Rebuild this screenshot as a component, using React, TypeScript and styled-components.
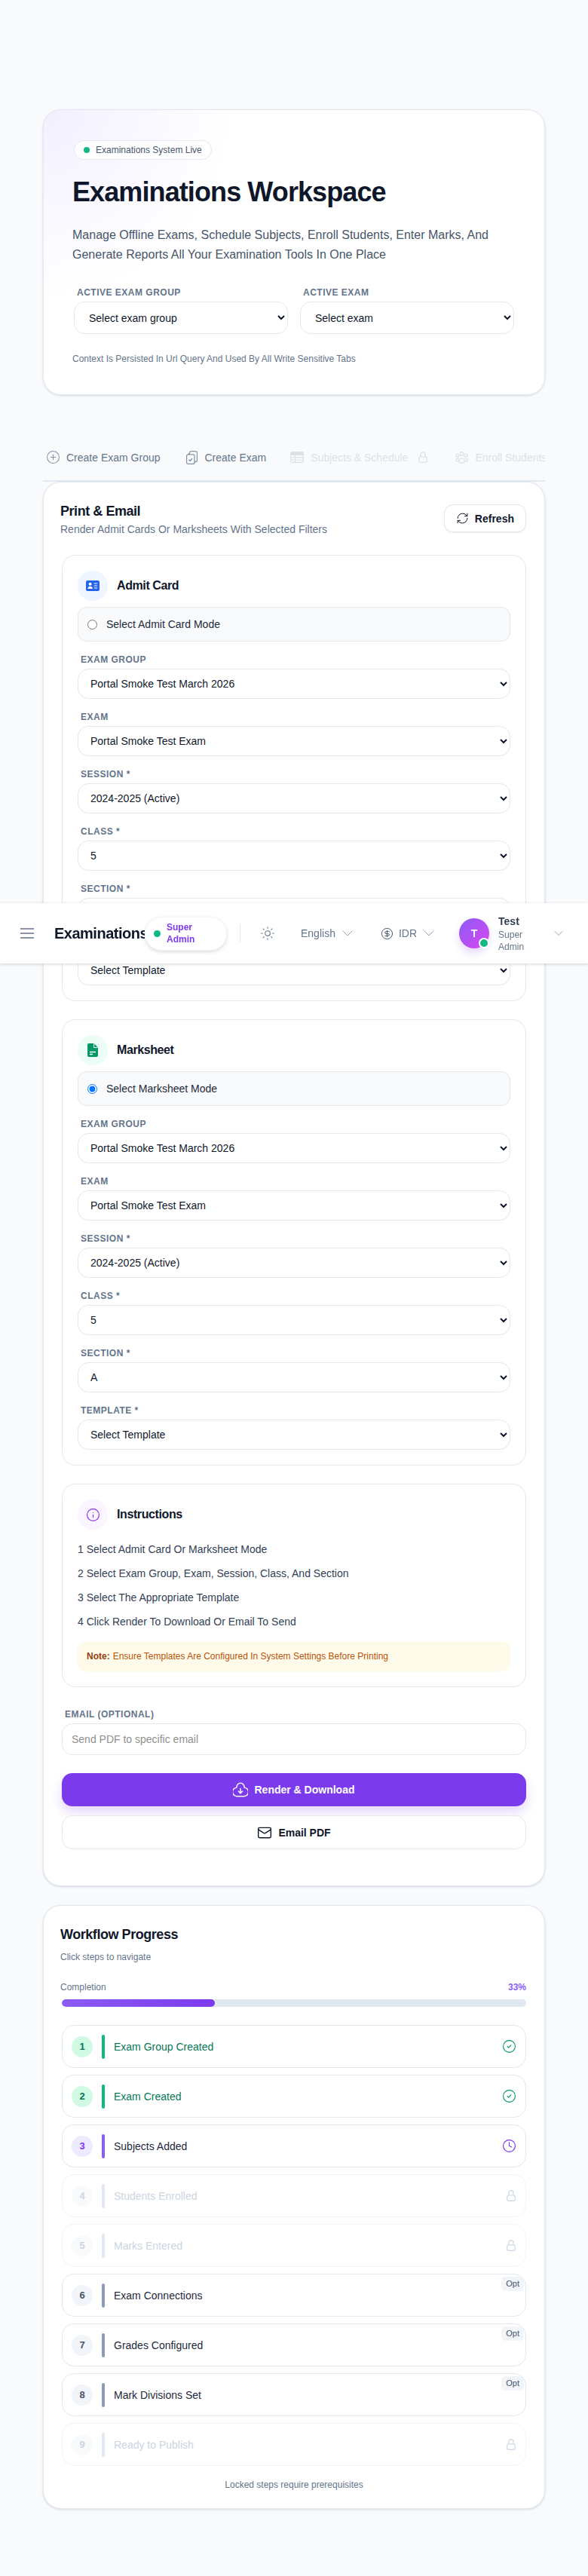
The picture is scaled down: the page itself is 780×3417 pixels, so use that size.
import { useState } from 'react';
import styled, { createGlobalStyle } from 'styled-components';
import {
  ChevronDown,
  CircleCheck,
  CircleDollarSign,
  CirclePlus,
  Clock,
  Info,
  Mail,
  RefreshCw,
  Sun,
} from 'lucide-react';

const GlobalStyle = createGlobalStyle`
  * { box-sizing: border-box; }
  html, body { margin: 0; padding: 0; }
  body {
    background: #f8fafc;
    font-family: "Liberation Sans", Arial, sans-serif;
    color: #0f172a;
  }
  #root { position: relative; }
`;

const Page = styled.div`
  position: relative;
  height: 3417px;
  padding: 145px 57px 0;
`;

const Hero = styled.section`
  height: 379px;
  padding: 40px;
  border: 1px solid #e2e8f0;
  border-radius: 24px;
  background: radial-gradient(circle at 0 0, #f3f0ff 0, #ffffff 33%);
  box-shadow: 0 1px 3px rgba(15, 23, 42, 0.14);
`;

const LiveBadge = styled.div`
  display: inline-flex;
  align-items: center;
  gap: 8px;
  height: 26px;
  padding: 0 12px;
  border: 1px solid #e2e8f0;
  border-radius: 13px;
  background: #fff;
  font-size: 12px;
  color: #475569;
`;

const Dot = styled.span<{ $size?: number }>`
  display: block;
  flex: none;
  width: ${(p) => p.$size ?? 8}px;
  height: ${(p) => p.$size ?? 8}px;
  border-radius: 50%;
  background: #10b981;
`;

const HeroTitle = styled.h1`
  margin: 21px 0 0 -2px;
  font-size: 36px;
  line-height: 44px;
  font-weight: 700;
  letter-spacing: -0.025em;
  color: #0f172a;
`;

const HeroText = styled.p`
  margin: 22px 0 0 -2px;
  font-size: 16px;
  line-height: 26px;
  color: #475569;
`;

const HeroGrid = styled.div`
  display: grid;
  grid-template-columns: 1fr 1fr;
  gap: 16px;
  margin-top: 29px;
`;

const FieldLabel = styled.label`
  display: block;
  margin: 0 0 4px 4px;
  font-size: 12px;
  line-height: 16px;
  font-weight: 700;
  letter-spacing: 0.5px;
  text-transform: uppercase;
  color: #64748b;
`;

const Select = styled.select<{ $hero?: boolean }>`
  display: block;
  width: 100%;
  height: ${(p) => (p.$hero ? 43 : 40)}px;
  padding: 0 0 0 ${(p) => (p.$hero ? 15 : 12)}px;
  border: 1px solid #e2e8f0;
  border-radius: 14px;
  background: #fff;
  font-family: inherit;
  font-size: 14px;
  color: #0f172a;
`;

const HeroNote = styled.p`
  margin: 25px 0 0 -2px;
  font-size: 12px;
  line-height: 16px;
  color: #64748b;
`;

const TabStrip = styled.nav`
  display: flex;
  align-items: center;
  gap: 32px;
  height: 61px;
  margin-top: 54px;
  padding: 0 0 2px 4px;
  border-bottom: 2px solid #e2e8f0;
  overflow: hidden;
  white-space: nowrap;
  font-size: 14px;
`;

const Tab = styled.div<{ $locked?: boolean }>`
  display: flex;
  flex: none;
  align-items: center;
  gap: 8px;
  color: #64748b;
  opacity: ${(p) => (p.$locked ? 0.18 : 1)};
  svg { color: ${(p) => (p.$locked ? '#64748b' : '#8492a6')}; flex: none; }
`;

const TabIconBox = styled.span<{ $wide?: boolean }>`
  display: flex;
  align-items: center;
  justify-content: center;
  width: ${(p) => (p.$wide ? 18 : 19)}px;
  height: 19px;
  margin-right: ${(p) => (p.$wide ? 1 : 0)}px;
`;

const TabLock = styled.span`
  display: flex;
  margin-left: 6px;
  margin-right: 4px;
`;

const Card = styled.section`
  border: 1px solid #e2e8f0;
  border-radius: 24px;
  background: #fff;
  box-shadow: 0 1px 3px rgba(15, 23, 42, 0.14);
`;

const PrintCard = styled(Card)`
  height: 1863px;
  padding: 24px;
`;

const PrintHeader = styled.header`
  display: flex;
  align-items: flex-start;
  justify-content: space-between;
  height: 72px;
`;

const CardTitle = styled.h2`
  margin: 0 0 0 -2px;
  font-size: 18px;
  line-height: 28px;
  font-weight: 700;
  letter-spacing: -0.025em;
  color: #0f172a;
`;

const CardSub = styled.p`
  margin: 0 0 0 -2px;
  font-size: 14px;
  line-height: 20px;
  color: #64748b;
`;

const RefreshButton = styled.button`
  display: flex;
  align-items: center;
  gap: 8px;
  height: 37px;
  margin-top: 5px;
  padding: 0 15px;
  border: 1px solid #e2e8f0;
  border-radius: 12px;
  background: #fff;
  box-shadow: 0 1px 2px rgba(15, 23, 42, 0.08);
  font-family: inherit;
  font-size: 14px;
  font-weight: 700;
  color: #0f172a;
`;

const Stack = styled.div`
  display: flex;
  flex-direction: column;
  gap: 24px;
`;

const Panel = styled.div<{ $height: number }>`
  height: ${(p) => p.$height}px;
  padding: 20px;
  border: 1px solid #e2e8f0;
  border-radius: 18px;
  background: #fff;
`;

const PanelHead = styled.div`
  display: flex;
  align-items: center;
  gap: 12px;
  height: 40px;
  margin-bottom: 8px;
`;

const PanelIcon = styled.div<{ $bg: string; $fg: string }>`
  display: flex;
  align-items: center;
  justify-content: center;
  width: 40px;
  height: 40px;
  border-radius: 50%;
  background: ${(p) => p.$bg};
  color: ${(p) => p.$fg};
`;

const PanelTitle = styled.h3`
  margin: 0;
  font-size: 16px;
  line-height: 24px;
  font-weight: 700;
  letter-spacing: -0.025em;
  color: #0f172a;
`;

const ModeRow = styled.label`
  display: flex;
  align-items: center;
  gap: 12px;
  height: 46px;
  padding: 0 12px;
  border: 1px solid #e2e8f0;
  border-radius: 12px;
  background: #f8fafc;
  font-size: 14px;
  color: #1e293b;
`;

const Radio = styled.input`
  width: 13px;
  height: 13px;
  margin: 0;
`;

const Fields = styled.div`
  display: flex;
  flex-direction: column;
  gap: 16px;
  margin-top: 16px;
`;

const Steps = styled.ol`
  margin: 16px 0 0;
  padding: 0;
  list-style: none;
`;

const StepLine = styled.li`
  font-size: 14px;
  line-height: 20px;
  color: #334155;
  & + & { margin-top: 12px; }
`;

const NoteBox = styled.div`
  display: flex;
  align-items: center;
  gap: 4px;
  height: 40px;
  margin-top: 16px;
  padding: 0 12px;
  border-radius: 10px;
  background: #fffbeb;
  font-size: 12px;
  color: #b45309;
  b { color: #92400e; }
`;

const EmailBlock = styled.div`
  margin-top: 28px;
`;

const TextInput = styled.input`
  display: block;
  width: 100%;
  height: 42px;
  padding: 0 12px;
  border: 1px solid #e2e8f0;
  border-radius: 14px;
  background: #fff;
  font-family: inherit;
  font-size: 14px;
  &::placeholder { color: #8f8f8f; }
`;

const WideButton = styled.button<{ $primary?: boolean }>`
  display: flex;
  align-items: center;
  justify-content: center;
  gap: 8px;
  width: 100%;
  height: ${(p) => (p.$primary ? 44 : 45)}px;
  margin-top: ${(p) => (p.$primary ? 24 : 12)}px;
  border: ${(p) => (p.$primary ? '0' : '1px solid #e2e8f0')};
  border-radius: 14px;
  background: ${(p) => (p.$primary ? '#7c3aed' : '#fff')};
  box-shadow: ${(p) => (p.$primary ? '0 8px 16px rgba(124, 58, 237, 0.2)' : 'none')};
  font-family: inherit;
  font-size: 14px;
  font-weight: 700;
  color: ${(p) => (p.$primary ? '#fff' : '#0f172a')};
`;

const WorkflowCard = styled(Card)`
  height: 801px;
  margin-top: 25px;
  padding: 24px;
`;

const SmallMuted = styled.p`
  margin: 8px 0 0 -2px;
  font-size: 12px;
  line-height: 16px;
  color: #64748b;
`;

const CompletionRow = styled.div`
  display: flex;
  justify-content: space-between;
  margin: 24px 0 0 -2px;
  font-size: 12px;
  line-height: 16px;
  color: #64748b;
  b { color: #8b5cf6; }
`;

const Track = styled.div`
  height: 10px;
  margin-top: 8px;
  border-radius: 5px;
  background: #e2e8f0;
  overflow: hidden;
`;

const Fill = styled.div`
  height: 100%;
  border-radius: 5px;
  background: linear-gradient(90deg, #8b5cf6, #7c3aed);
`;

const StepList = styled.div`
  display: flex;
  flex-direction: column;
  gap: 9px;
  margin-top: 24px;
`;

type StepState = 'done' | 'current' | 'locked' | 'optional';

const stepColors: Record<StepState, { circle: string; num: string; bar: string; text: string }> = {
  done: { circle: '#d1fae5', num: '#047857', bar: '#10b981', text: '#047857' },
  current: { circle: '#ede9fe', num: '#7c3aed', bar: '#8b5cf6', text: '#1e293b' },
  locked: { circle: '#f8fafc', num: '#cbd5e1', bar: '#e2e8f0', text: '#cbd5e1' },
  optional: { circle: '#f1f5f9', num: '#475569', bar: '#8b9bb8', text: '#1e293b' },
};

const StepRow = styled.div<{ $state: StepState }>`
  position: relative;
  display: flex;
  align-items: center;
  height: 57px;
  padding: 0 12px;
  border: 1px solid ${(p) => (p.$state === 'locked' ? '#f1f5f9' : '#e2e8f0')};
  border-radius: 16px;
  background: #fff;
  font-size: 14px;
  color: ${(p) => stepColors[p.$state].text};
`;

const StepNumber = styled.span<{ $state: StepState }>`
  display: flex;
  flex: none;
  align-items: center;
  justify-content: center;
  width: 28px;
  height: 28px;
  border-radius: 50%;
  background: ${(p) => stepColors[p.$state].circle};
  color: ${(p) => stepColors[p.$state].num};
  font-size: 13px;
  font-weight: 700;
`;

const StepBar = styled.span<{ $state: StepState }>`
  flex: none;
  width: 4px;
  height: 32px;
  margin: 0 12px;
  border-radius: 2px;
  background: ${(p) => stepColors[p.$state].bar};
`;

const StepLabel = styled.span`
  flex: 1;
`;

const StepLock = styled.span`
  display: flex;
  margin-right: 1px;
  color: #cbd5e1;
`;

const OptBadge = styled.span`
  position: absolute;
  top: 3px;
  right: 2px;
  height: 19px;
  padding: 0 6px;
  border-radius: 6px;
  background: #f1f5f9;
  font-size: 11px;
  line-height: 19px;
  color: #475569;
`;

const LockedFoot = styled.p`
  margin: 17px 0 0;
  text-align: center;
  font-size: 12px;
  line-height: 16px;
  color: #64748b;
`;

/* the app bar is sticky in the real page, here it sits over the scrolled content */
const TopBar = styled.header`
  position: absolute;
  top: 1198px;
  left: 0;
  right: 0;
  display: flex;
  align-items: center;
  height: 80px;
  padding-left: 27px;
  background: rgba(255, 255, 255, 0.97);
  backdrop-filter: blur(12px);
  box-shadow: 0 1px 4px rgba(15, 23, 42, 0.18);
`;

const MenuIcon = styled.svg`
  flex: none;
  color: #64748b;
`;

const BarTitle = styled.div`
  flex: none;
  width: 120px;
  margin-left: 27px;
  overflow: hidden;
  white-space: nowrap;
  font-size: 20px;
  line-height: 28px;
  font-weight: 700;
  letter-spacing: -0.025em;
  color: #0f172a;
`;

const RolePill = styled.div`
  display: flex;
  flex: none;
  align-items: center;
  gap: 8px;
  width: 109px;
  height: 45px;
  padding: 0 11px;
  border: 1px solid #f1f5f9;
  border-radius: 23px;
  background: #fff;
  box-shadow: 0 2px 5px rgba(15, 23, 42, 0.14);
  font-size: 12px;
  line-height: 16px;
  font-weight: 700;
  color: #7c3aed;
  span:last-child { width: 50px; }
`;

const Divider = styled.span`
  flex: none;
  width: 1px;
  height: 24px;
  margin: 0 26px 0 17px;
  background: #e2e8f0;
`;

const BarItem = styled.div<{ $left: number }>`
  display: flex;
  flex: none;
  align-items: center;
  margin-left: ${(p) => p.$left}px;
  font-size: 14px;
  color: #64748b;
`;

const ItemIcon = styled.span`
  display: flex;
  margin-right: 7px;
  color: #475569;
`;

const ItemChevron = styled.span`
  display: flex;
  margin-left: 4px;
  color: #94a3b8;
`;

const Avatar = styled.div`
  position: relative;
  display: flex;
  flex: none;
  align-items: center;
  justify-content: center;
  width: 40px;
  height: 40px;
  margin-left: 28px;
  border-radius: 50%;
  background: linear-gradient(135deg, #8b5cf6, #d946ef);
  box-shadow: 0 6px 12px rgba(124, 58, 237, 0.2);
  font-size: 14px;
  font-weight: 700;
  color: #fff;
`;

const AvatarDot = styled.span`
  position: absolute;
  right: 0;
  bottom: 0;
  width: 14px;
  height: 14px;
  border: 2px solid #fff;
  border-radius: 50%;
  background: #10b981;
`;

const UserBlock = styled.div`
  flex: none;
  width: 70px;
  margin-left: 12px;
  font-size: 12px;
  line-height: 16px;
  color: #64748b;
  b {
    display: block;
    font-size: 14px;
    line-height: 20px;
    color: #334155;
  }
  span { display: block; width: 40px; }
`;

const UserChevron = styled.span`
  display: flex;
  color: #94a3b8;
`;

/* small drawn icons */
const LockIcon = () => (
  <svg width="12" height="15" viewBox="0 0 12 15" fill="none" stroke="currentColor" strokeWidth="1.2">
    <rect x="0.7" y="7" width="10.6" height="7.3" rx="2.2" />
    <path d="M3 7V3.8a3 3 0 0 1 6 0V7" />
  </svg>
);

const ClipboardsIcon = () => (
  <svg width="15" height="18" viewBox="0 0 15 18" fill="none" stroke="currentColor" strokeWidth="1.2" strokeLinecap="round" strokeLinejoin="round">
    <rect x="0.6" y="4.8" width="10.4" height="12.6" rx="2" />
    <path d="M3.2 4.8V3.8h1.4M4.5 4.6V2.6a2 2 0 0 1 2-2h6a2 2 0 0 1 2 2v10a2 2 0 0 1-2 2H11" />
    <path d="M3.7 12l1.5 1.5 2.5-3" />
  </svg>
);

const TableIcon = () => (
  <svg width="18" height="15" viewBox="0 0 18 15" fill="none" stroke="currentColor" strokeWidth="1.2">
    <rect x="0.6" y="0.6" width="16.8" height="13.8" rx="2" />
    <path d="M1 1.5h16v3H1z" fill="currentColor" />
    <path d="M0.6 7.6h16.8M0.6 11h16.8M6.4 4.5v9.9" />
  </svg>
);

const GroupIcon = () => (
  <svg width="17" height="16" viewBox="0 0 17 16" fill="none" stroke="currentColor" strokeWidth="1.2" strokeLinecap="round">
    <circle cx="8.5" cy="3" r="2.4" />
    <circle cx="2.8" cy="5.2" r="1.9" />
    <circle cx="14.2" cy="5.2" r="1.9" />
    <path d="M4.6 13.4c0-2.6 1.7-4.4 3.9-4.4s3.9 1.8 3.9 4.4c-1 1.3-2.4 2-3.9 2s-2.9-.7-3.9-2z" />
    <path d="M4.4 9.2c-1.9-.4-3.6.6-3.8 2.6.6.7 1.8 1.2 3.2 1.2M12.6 9.2c1.9-.4 3.6.6 3.8 2.6-.6.7-1.8 1.2-3.2 1.2" />
  </svg>
);

const IdBadgeIcon = () => (
  <svg width="18" height="14" viewBox="0 0 18 14">
    <rect width="18" height="14" rx="2.2" fill="currentColor" />
    <circle cx="5.6" cy="4.8" r="2" fill="#fff" />
    <path d="M2.4 11c0-2 1.5-3.2 3.2-3.2S8.8 9 8.8 11z" fill="#fff" />
    <path d="M10.8 4h4.4M10.8 7h4.4M10.8 10h4.4" stroke="#fff" strokeWidth="1.2" />
  </svg>
);

const SheetIcon = () => (
  <svg width="14" height="18" viewBox="0 0 14 18">
    <path d="M2 0h6.5L14 5.5V16a2 2 0 0 1-2 2H2a2 2 0 0 1-2-2V2a2 2 0 0 1 2-2z" fill="currentColor" />
    <path d="M8.6 0.4v5.2h5" fill="none" stroke="#fff" strokeWidth="1" />
    <path d="M3 11.5h8M3 14.5h4" stroke="#fff" strokeWidth="1.4" />
  </svg>
);

const CloudArrowIcon = () => (
  <svg width="20" height="20" viewBox="0 0 24 24" fill="none" stroke="currentColor" strokeWidth="1.7" strokeLinecap="round" strokeLinejoin="round">
    <path d="M12 1.5a6 6 0 0 0-6 6v1A6 6 0 0 0 7 22.5h10a6 6 0 0 0 1-14v-1a6 6 0 0 0-6-6z" />
    <path d="M12 10v7.5M8.8 14.5l3.2 3.2 3.2-3.2" />
  </svg>
);

type FieldDef = { label: string; value: string };

const filterFields: FieldDef[] = [
  { label: 'Exam Group', value: 'Portal Smoke Test March 2026' },
  { label: 'Exam', value: 'Portal Smoke Test Exam' },
  { label: 'Session *', value: '2024-2025 (Active)' },
  { label: 'Class *', value: '5' },
  { label: 'Section *', value: 'A' },
  { label: 'Template *', value: 'Select Template' },
];

function ModePanel({
  title,
  icon,
  bg,
  fg,
  mode,
  checked,
}: {
  title: string;
  icon: React.ReactNode;
  bg: string;
  fg: string;
  mode: string;
  checked: boolean;
}) {
  return (
    <Panel $height={592}>
      <PanelHead>
        <PanelIcon $bg={bg} $fg={fg}>{icon}</PanelIcon>
        <PanelTitle>{title}</PanelTitle>
      </PanelHead>
      <ModeRow>
        <Radio type="radio" readOnly checked={checked} />
        {mode}
      </ModeRow>
      <Fields>
        {filterFields.map((f) => (
          <div key={f.label}>
            <FieldLabel>{f.label}</FieldLabel>
            <Select defaultValue={f.value}>
              <option>{f.value}</option>
            </Select>
          </div>
        ))}
      </Fields>
    </Panel>
  );
}

const workflow: { n: number; label: string; state: StepState }[] = [
  { n: 1, label: 'Exam Group Created', state: 'done' },
  { n: 2, label: 'Exam Created', state: 'done' },
  { n: 3, label: 'Subjects Added', state: 'current' },
  { n: 4, label: 'Students Enrolled', state: 'locked' },
  { n: 5, label: 'Marks Entered', state: 'locked' },
  { n: 6, label: 'Exam Connections', state: 'optional' },
  { n: 7, label: 'Grades Configured', state: 'optional' },
  { n: 8, label: 'Mark Divisions Set', state: 'optional' },
  { n: 9, label: 'Ready to Publish', state: 'locked' },
];

function StepStatus({ state }: { state: StepState }) {
  if (state === 'done') return <CircleCheck size={19} color="#059669" strokeWidth={1.4} />;
  if (state === 'current') return <Clock size={19} color="#7c3aed" strokeWidth={1.5} />;
  if (state === 'locked') return <StepLock><LockIcon /></StepLock>;
  return <OptBadge>Opt</OptBadge>;
}

export default function App() {
  const [email, setEmail] = useState('');

  return (
    <Page>
      <GlobalStyle />
      <Hero>
        <LiveBadge>
          <Dot />
          Examinations System Live
        </LiveBadge>
        <HeroTitle>Examinations Workspace</HeroTitle>
        <HeroText>
          Manage Offline Exams, Schedule Subjects, Enroll Students, Enter Marks, And Generate Reports All Your
          Examination Tools In One Place
        </HeroText>
        <HeroGrid>
          <div>
            <FieldLabel>Active Exam Group</FieldLabel>
            <Select $hero>
              <option>Select exam group</option>
            </Select>
          </div>
          <div>
            <FieldLabel>Active Exam</FieldLabel>
            <Select $hero>
              <option>Select exam</option>
            </Select>
          </div>
        </HeroGrid>
        <HeroNote>Context Is Persisted In Url Query And Used By All Write Sensitive Tabs</HeroNote>
      </Hero>

      <TabStrip>
        <Tab>
          <TabIconBox><CirclePlus size={19} strokeWidth={1.3} /></TabIconBox>
          Create Exam Group
        </Tab>
        <Tab>
          <TabIconBox><ClipboardsIcon /></TabIconBox>
          Create Exam
        </Tab>
        <Tab $locked>
          <TabIconBox $wide><TableIcon /></TabIconBox>
          Subjects &amp; Schedule
          <TabLock><LockIcon /></TabLock>
        </Tab>
        <Tab $locked>
          <TabIconBox $wide><GroupIcon /></TabIconBox>
          Enroll Students
        </Tab>
      </TabStrip>

      <PrintCard>
        <PrintHeader>
          <div>
            <CardTitle>Print &amp; Email</CardTitle>
            <CardSub>Render Admit Cards Or Marksheets With Selected Filters</CardSub>
          </div>
          <RefreshButton>
            <RefreshCw size={17} strokeWidth={1.4} />
            Refresh
          </RefreshButton>
        </PrintHeader>

        <Stack>
          <ModePanel
            title="Admit Card"
            icon={<IdBadgeIcon />}
            bg="#eff6ff"
            fg="#2563eb"
            mode="Select Admit Card Mode"
            checked={false}
          />
          <ModePanel
            title="Marksheet"
            icon={<SheetIcon />}
            bg="#ecfdf5"
            fg="#059669"
            mode="Select Marksheet Mode"
            checked
          />
          <Panel $height={270}>
            <PanelHead>
              <PanelIcon $bg="#faf5ff" $fg="#9333ea"><Info size={19} strokeWidth={1.5} /></PanelIcon>
              <PanelTitle>Instructions</PanelTitle>
            </PanelHead>
            <Steps>
              <StepLine>1 Select Admit Card Or Marksheet Mode</StepLine>
              <StepLine>2 Select Exam Group, Exam, Session, Class, And Section</StepLine>
              <StepLine>3 Select The Appropriate Template</StepLine>
              <StepLine>4 Click Render To Download Or Email To Send</StepLine>
            </Steps>
            <NoteBox>
              <b>Note:</b> Ensure Templates Are Configured In System Settings Before Printing
            </NoteBox>
          </Panel>
        </Stack>

        <EmailBlock>
          <FieldLabel>Email (Optional)</FieldLabel>
          <TextInput
            placeholder="Send PDF to specific email"
            value={email}
            onChange={(e) => setEmail(e.target.value)}
          />
        </EmailBlock>
        <WideButton $primary>
          <CloudArrowIcon />
          Render &amp; Download
        </WideButton>
        <WideButton>
          <Mail size={20} strokeWidth={1.7} />
          Email PDF
        </WideButton>
      </PrintCard>

      <WorkflowCard>
        <CardTitle>Workflow Progress</CardTitle>
        <SmallMuted>Click steps to navigate</SmallMuted>
        <CompletionRow>
          <span>Completion</span>
          <b>33%</b>
        </CompletionRow>
        <Track>
          <Fill style={{ width: '33%' }} />
        </Track>
        <StepList>
          {workflow.map((s) => (
            <StepRow key={s.n} $state={s.state}>
              <StepNumber $state={s.state}>{s.n}</StepNumber>
              <StepBar $state={s.state} />
              <StepLabel>{s.label}</StepLabel>
              <StepStatus state={s.state} />
            </StepRow>
          ))}
        </StepList>
        <LockedFoot>Locked steps require prerequisites</LockedFoot>
      </WorkflowCard>

      <TopBar>
        <MenuIcon width="18" height="14" viewBox="0 0 18 14" fill="none" stroke="currentColor" strokeWidth="1.5">
          <path d="M0 1h18M0 7h18M0 13h18" />
        </MenuIcon>
        <BarTitle>Examinations</BarTitle>
        <RolePill>
          <Dot $size={9} />
          <span>Super Admin</span>
        </RolePill>
        <Divider />
        <Sun size={20} color="#64748b" strokeWidth={1.3} />
        <BarItem $left={34}>
          English
          <ItemChevron><ChevronDown size={24} strokeWidth={1} /></ItemChevron>
        </BarItem>
        <BarItem $left={32}>
          <ItemIcon><CircleDollarSign size={17} strokeWidth={1.4} /></ItemIcon>
          IDR
          <ItemChevron><ChevronDown size={24} strokeWidth={1} /></ItemChevron>
        </BarItem>
        <Avatar>
          T
          <AvatarDot />
        </Avatar>
        <UserBlock>
          <b>Test</b>
          <span>Super Admin</span>
        </UserBlock>
        <UserChevron><ChevronDown size={20} strokeWidth={1.2} /></UserChevron>
      </TopBar>
    </Page>
  );
}
